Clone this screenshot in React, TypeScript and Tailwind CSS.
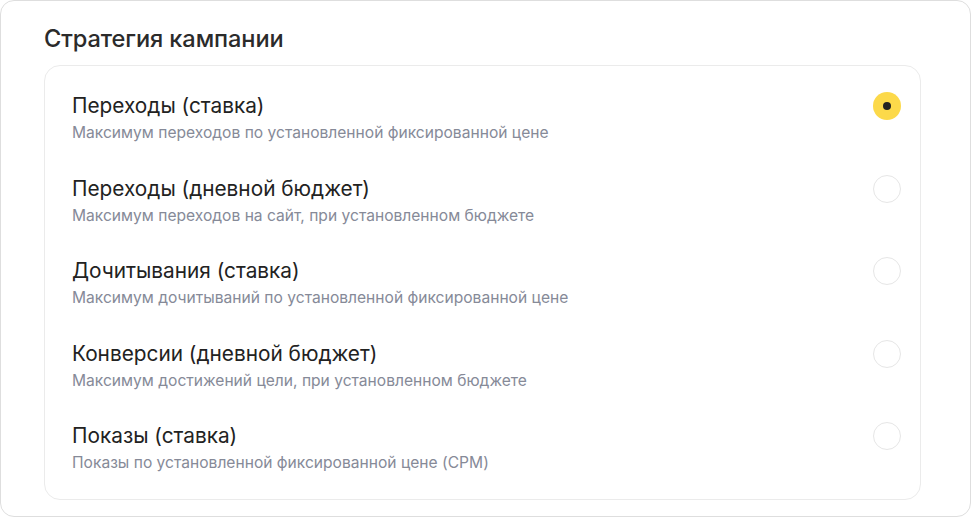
const strategies = [
  { title: "Переходы (ставка)", hint: "Максимум переходов по установленной фиксированной цене" },
  { title: "Переходы (дневной бюджет)", hint: "Максимум переходов на сайт, при установленном бюджете" },
  { title: "Дочитывания (ставка)", hint: "Максимум дочитываний по установленной фиксированной цене" },
  { title: "Конверсии (дневной бюджет)", hint: "Максимум достижений цели, при установленном бюджете" },
  { title: "Показы (ставка)", hint: "Показы по установленной фиксированной цене (CPM)" },
];

export default function App() {
  const selected = 0;

  return (
    <div className="w-[972px] h-[518px] bg-white" style={{ fontFamily: "Inter, 'Noto Sans', sans-serif" }}>
      <div className="w-[971px] h-[517px] border border-[#dedede] rounded-[14px] bg-white pl-[43px] pr-[49px] pt-[24px]">
        <h2 className="text-[23.6px] leading-[28px] font-medium text-[#2b2b2b] tracking-[-0.1px]">Стратегия кампании</h2>

        <div className="mt-[12px] border border-[#ebebeb] rounded-[16px] pl-[27px] pr-[19px] pt-[28px] pb-[26px] flex flex-col gap-[33.5px]">
          {strategies.map((s, i) => (
            <div key={s.title} className="flex items-start justify-between">
              <div>
                <div className="text-[20.8px] leading-[24px] text-[#222222]">{s.title}</div>
                <div className="text-[15.6px] leading-[20px] mt-[5px] text-[#868a98]">{s.hint}</div>
              </div>
              {i === selected ? (
                <div className="w-[28px] h-[28px] mt-[-2px] rounded-full bg-[#fcd94a] flex items-center justify-center">
                  <div className="w-[8px] h-[8px] rounded-full bg-[#222222]" />
                </div>
              ) : (
                <div className="w-[28px] h-[28px] mt-[-2px] rounded-full border border-[#e6e6e6] bg-white" />
              )}
            </div>
          ))}
        </div>
      </div>
    </div>
  );
}
